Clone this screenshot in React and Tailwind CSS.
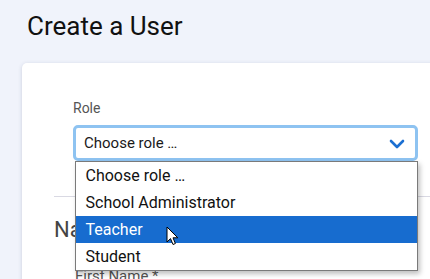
import * as React from "react";

const roles = ["Choose role …", "School Administrator", "Teacher", "Student"];

function Cursor() {
    return (
        <svg
            className="absolute left-[90px] top-[10px]"
            width="13"
            height="20"
            viewBox="0 0 13 20"
        >
            <path
                d="M1 1 L1 16 L4.5 12.6 L7 18.5 L9.4 17.5 L7 11.8 L11.8 11.8 Z"
                fill="#fff"
                stroke="#000"
                strokeWidth="1"
                strokeLinejoin="round"
            />
        </svg>
    );
}

function RoleSelect() {
    const active = "Teacher";
    return (
        <div className="relative w-[345px]">
            <div className="flex h-[36px] items-center justify-between rounded-[5px] border-[3px] border-[#8ec3f1] bg-white pl-[8px] pr-[8px]">
                <span className="text-[15px] text-[#1a1a1a]">Choose role …</span>
                <svg width="16" height="10" viewBox="0 0 16 10" className="mr-[2px] mt-[1px]">
                    <path
                        d="M2 2 L8 8 L14 2"
                        fill="none"
                        stroke="#1b6fd2"
                        strokeWidth="2.6"
                        strokeLinecap="round"
                        strokeLinejoin="round"
                    />
                </svg>
            </div>
            <ul className="absolute left-[1.5px] top-[36px] z-10 w-[343px] border border-[#7a7a7a] bg-white shadow-[2px_3px_5px_rgba(0,0,0,0.25)]">
                {roles.map((r) => (
                    <li
                        key={r}
                        className={
                            r === active
                                ? "relative flex h-[27px] items-center bg-[#176ccf] px-[10px] text-[16px] text-white"
                                : "flex h-[27px] items-center px-[10px] text-[16px] text-[#111]"
                        }
                    >
                        {r}
                        {r === active && <Cursor />}
                    </li>
                ))}
            </ul>
        </div>
    );
}

export default function App() {
    return (
        <div
            className="h-[279px] w-[430px] overflow-hidden bg-[#f0f3fb]"
            style={{ fontFamily: "Roboto, 'Liberation Sans', sans-serif" }}
        >
            <h1 className="pl-[27px] pt-[10px] text-[26px] leading-[32px] text-[#111]">
                Create a User
            </h1>
            <div className="ml-[22px] mt-[21px] w-[440px] rounded-tl-[5px] bg-white pl-[32px] pt-[36px] shadow-[0_1px_4px_rgba(40,50,90,0.18)]">
                <div className="pl-[19px]">
                    <label className="block text-[14px] leading-[18px] text-[#555]">Role</label>
                    <div className="mt-[8px]">
                        <RoleSelect />
                    </div>
                </div>
                <hr className="mt-[35px] border-t border-[#d9d9e3]" />
                <h2 className="mt-[20px] text-[22px] leading-[26px] text-[#444]">Name</h2>
                <div className="mt-[24px] pl-[21px] text-[15px] leading-[18px] text-[#555]">
                    First Name *
                </div>
                <div className="h-[40px]" />
            </div>
        </div>
    );
}
